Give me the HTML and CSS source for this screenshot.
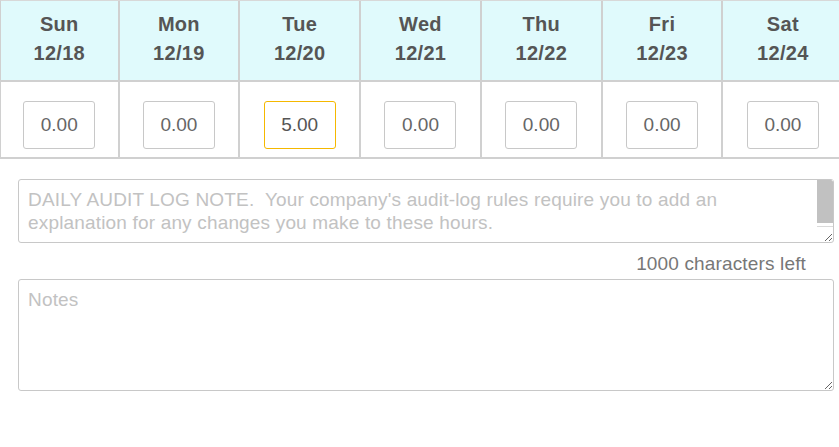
FILE: index.html
```html
<!DOCTYPE html>
<html>
<head>
<meta charset="utf-8">
<link rel="stylesheet" href="styles.css">
</head>
<body>
<div class="week">
  <div class="day-head"><div>Sun</div><div>12/18</div></div>
  <div class="day-head"><div>Mon</div><div>12/19</div></div>
  <div class="day-head"><div>Tue</div><div>12/20</div></div>
  <div class="day-head"><div>Wed</div><div>12/21</div></div>
  <div class="day-head"><div>Thu</div><div>12/22</div></div>
  <div class="day-head"><div>Fri</div><div>12/23</div></div>
  <div class="day-head"><div>Sat</div><div>12/24</div></div>
  <div class="day-cell"><input class="hours" type="text" value="0.00"></div>
  <div class="day-cell"><input class="hours" type="text" value="0.00"></div>
  <div class="day-cell"><input class="hours hours-active" type="text" value="5.00"></div>
  <div class="day-cell"><input class="hours" type="text" value="0.00"></div>
  <div class="day-cell"><input class="hours" type="text" value="0.00"></div>
  <div class="day-cell"><input class="hours" type="text" value="0.00"></div>
  <div class="day-cell"><input class="hours" type="text" value="0.00"></div>
</div>
<div class="notes-area">
  <div class="audit-wrap">
    <textarea class="audit" placeholder="DAILY AUDIT LOG NOTE.  Your company's audit-log rules require you to add an explanation for any changes you make to these hours."></textarea>
    <div class="fake-scroll"><div class="fake-thumb"></div></div>
  </div>
  <div class="counter">1000 characters left</div>
  <textarea class="notes" placeholder="Notes"></textarea>
</div>
</body>
</html>
```

FILE: styles.css
```css
html, body {
  margin: 0;
  padding: 0;
  overflow: hidden;
  background: #fff;
  font-family: "Liberation Sans", Arial, sans-serif;
}
.week {
  display: grid;
  grid-template-columns: 118.5px repeat(6, 120.8px);
  width: 845px;
  border-left: 1px solid #d0d0d0;
  border-top: 1px solid #d8d8d8;
}
.day-head {
  box-sizing: border-box;
  height: 81px;
  background: #e0fafc;
  border-right: 2px solid #d0d0d0;
  border-bottom: 2px solid #d0d0d0;
  padding-top: 9px;
  text-align: center;
  font-weight: bold;
  font-size: 20px;
  letter-spacing: 0.3px;
  line-height: 29px;
  color: #555;
}
.day-cell {
  box-sizing: border-box;
  height: 77px;
  border-right: 2px solid #d0d0d0;
  border-bottom: 2px solid #d0d0d0;
  display: flex;
  justify-content: center;
  padding-top: 19px;
}
.hours {
  box-sizing: border-box;
  width: 72px;
  height: 48px;
  border: 1px solid #c8c8c8;
  border-radius: 3px;
  text-align: center;
  font-family: "Liberation Sans", Arial, sans-serif;
  font-size: 19px;
  color: #666;
  padding: 0;
  outline: none;
}
.hours-active {
  border-color: #f5b800;
  color: #555;
}
.notes-area {
  padding: 20px 5px 0 18px;
  display: flex;
  flex-direction: column;
}
.audit-wrap {
  position: relative;
  width: 816px;
  height: 64px;
}
.audit, .notes {
  box-sizing: border-box;
  display: block;
  width: 816px;
  border: 1px solid #c8c8c8;
  border-radius: 3px;
  font-family: "Liberation Sans", Arial, sans-serif;
  font-size: 19px;
  letter-spacing: 0.17px;
  line-height: 23px;
  padding: 8px 9px;
  color: #555;
  resize: both;
  margin: 0;
  outline: none;
}
.audit {
  height: 64px;
  padding-right: 26px;
}
.notes {
  height: 112px;
}
.audit::placeholder, .notes::placeholder {
  color: #c2c2c2;
}
.fake-scroll {
  position: absolute;
  top: 1px;
  right: 1px;
  width: 16px;
  height: 46px;
  background: #fff;
  border-bottom: 1px solid #dadada;
}
.fake-thumb {
  height: 43px;
  background: #c1c1c1;
  border-radius: 0 2px 0 0;
}
.counter {
  width: 788px;
  text-align: right;
  font-size: 19px;
  letter-spacing: 0.15px;
  line-height: 22px;
  color: #777;
  padding: 10px 0 4px;
}
```
